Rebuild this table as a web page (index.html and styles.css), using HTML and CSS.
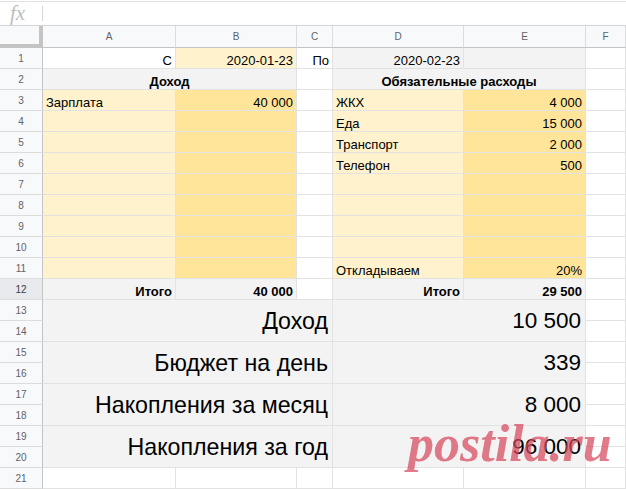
FILE: index.html
```html
<!DOCTYPE html>
<html lang="ru">
<head>
<meta charset="utf-8">
<link rel="stylesheet" href="styles.css">
</head>
<body>
<div class="formula-bar"><span class="fx">fx</span><span class="fx-sep"></span></div>
<div class="sheet">
  <div class="corner"></div>
  <div class="ch">A</div><div class="ch">B</div><div class="ch">C</div><div class="ch">D</div><div class="ch">E</div><div class="ch">F</div>

  <div class="rh">1</div>
  <div class="c r">С</div><div class="c r ly">2020-01-23</div><div class="c r">По</div><div class="c r gr">2020-02-23</div><div class="c gr"></div><div class="c"></div>

  <div class="rh">2</div>
  <div class="c ctr b gr span2">Доход</div><div class="c"></div><div class="c ctr b gr span2">Обязательные расходы</div><div class="c"></div>

  <div class="rh">3</div>
  <div class="c ly">Зарплата</div><div class="c r ye">40 000</div><div class="c"></div><div class="c ly">ЖКХ</div><div class="c r ye">4 000</div><div class="c"></div>

  <div class="rh">4</div>
  <div class="c ly"></div><div class="c ye"></div><div class="c"></div><div class="c ly">Еда</div><div class="c r ye">15 000</div><div class="c"></div>

  <div class="rh">5</div>
  <div class="c ly"></div><div class="c ye"></div><div class="c"></div><div class="c ly">Транспорт</div><div class="c r ye">2 000</div><div class="c"></div>

  <div class="rh">6</div>
  <div class="c ly"></div><div class="c ye"></div><div class="c"></div><div class="c ly">Телефон</div><div class="c r ye">500</div><div class="c"></div>

  <div class="rh">7</div>
  <div class="c ly"></div><div class="c ye"></div><div class="c"></div><div class="c ly"></div><div class="c ye"></div><div class="c"></div>

  <div class="rh">8</div>
  <div class="c ly"></div><div class="c ye"></div><div class="c"></div><div class="c ly"></div><div class="c ye"></div><div class="c"></div>

  <div class="rh">9</div>
  <div class="c ly"></div><div class="c ye"></div><div class="c"></div><div class="c ly"></div><div class="c ye"></div><div class="c"></div>

  <div class="rh">10</div>
  <div class="c ly"></div><div class="c ye"></div><div class="c"></div><div class="c ly"></div><div class="c ye"></div><div class="c"></div>

  <div class="rh">11</div>
  <div class="c ly"></div><div class="c ye"></div><div class="c"></div><div class="c ly">Откладываем</div><div class="c r ye">20%</div><div class="c"></div>

  <div class="rh sel">12</div>
  <div class="c r b gr">Итого</div><div class="c r b gr">40 000</div><div class="c"></div><div class="c r b gr">Итого</div><div class="c r b gr">29 500</div><div class="c"></div>

  <div class="rh">13</div>
  <div class="c big gr label">Доход</div><div class="c big gr value">10 500</div><div class="c"></div>
  <div class="rh">14</div>
  <div class="c"></div>

  <div class="rh">15</div>
  <div class="c big gr label">Бюджет на день</div><div class="c big gr value">339</div><div class="c"></div>
  <div class="rh">16</div>
  <div class="c"></div>

  <div class="rh">17</div>
  <div class="c big gr label">Накопления за месяц</div><div class="c big gr value">8 000</div><div class="c"></div>
  <div class="rh">18</div>
  <div class="c"></div>

  <div class="rh">19</div>
  <div class="c big gr label">Накопления за год</div><div class="c big gr value">96 000</div><div class="c"></div>
  <div class="rh">20</div>
  <div class="c"></div>

  <div class="rh">21</div>
  <div class="c"></div><div class="c"></div><div class="c"></div><div class="c"></div><div class="c"></div><div class="c"></div>
</div>
<div class="watermark">postila.ru</div>
</body>
</html>
```

FILE: styles.css
```css
html, body {
  margin: 0;
  padding: 0;
  background: #ffffff;
  overflow: hidden;
}
body {
  width: 626px;
  height: 489px;
  position: relative;
  font-family: "Liberation Sans", Arial, sans-serif;
  color: #000;
}
.formula-bar {
  height: 23px;
  margin-top: 1px;
  border-top: 1px solid #e2e2e2;
  border-bottom: 1px solid #d4d4d4;
  display: flex;
  align-items: center;
  box-sizing: content-box;
}
.fx {
  font-family: "Liberation Serif", "DejaVu Serif", serif;
  font-style: italic;
  font-size: 21px;
  color: #bdbdbd;
  width: 42px;
  padding-left: 10px;
  box-sizing: border-box;
  line-height: 20px;
  margin-top: -2px;
}
.fx-sep {
  width: 1px;
  height: 15px;
  background: #d6d6d6;
}
.sheet {
  display: grid;
  grid-template-columns: 43px 133px 121px 36px 131px 122px 40px;
  grid-template-rows: 22px repeat(21, 21px);
  font-size: 13px;
}
.corner {
  background: #f8f9fa;
  border-right: 4px solid #c4c4c4;
  border-bottom: 4px solid #c4c4c4;
}
.ch {
  background: #f8f9fa;
  border-right: 1px solid #dcdcdc;
  border-bottom: 1px solid #c4c4c4;
  color: #5f6368;
  font-size: 10px;
  display: flex;
  align-items: center;
  justify-content: center;
}
.rh {
  background: #f8f9fa;
  border-right: 1px solid #c4c4c4;
  border-bottom: 1px solid #dcdcdc;
  color: #5f6368;
  font-size: 10px;
  display: flex;
  align-items: center;
  justify-content: center;
}
.rh.sel {
  background: #e8eaed;
  color: #3c4043;
}
.c {
  border-right: 1px solid #e2e2e2;
  border-bottom: 1px solid #e2e2e2;
  padding: 0 3px;
  display: flex;
  align-items: flex-end;
  line-height: 15px;
  white-space: nowrap;
  overflow: hidden;
  min-width: 0;
}
.r { justify-content: flex-end; }
.ctr { justify-content: center; }
.b { font-weight: bold; }
.ly { background: #fff2cc; }
.ye { background: #ffe599; }
.gr { background: #f3f3f3; }
.span2 { grid-column: span 2; }
.big {
  grid-row: span 2;
  font-size: 22.5px;
  align-items: center;
  justify-content: flex-end;
  line-height: 26px;
  padding-right: 4px;
}
.big.label { grid-column: span 3; font-size: 23.2px; }
.big.value { grid-column: span 2; }
.watermark {
  position: absolute;
  left: 408px;
  top: 415px;
  font-family: "Liberation Serif", "DejaVu Serif", serif;
  font-style: italic;
  font-weight: bold;
  font-size: 52px;
  line-height: 58px;
  color: rgba(214, 70, 92, 0.72);
  pointer-events: none;
}
```
